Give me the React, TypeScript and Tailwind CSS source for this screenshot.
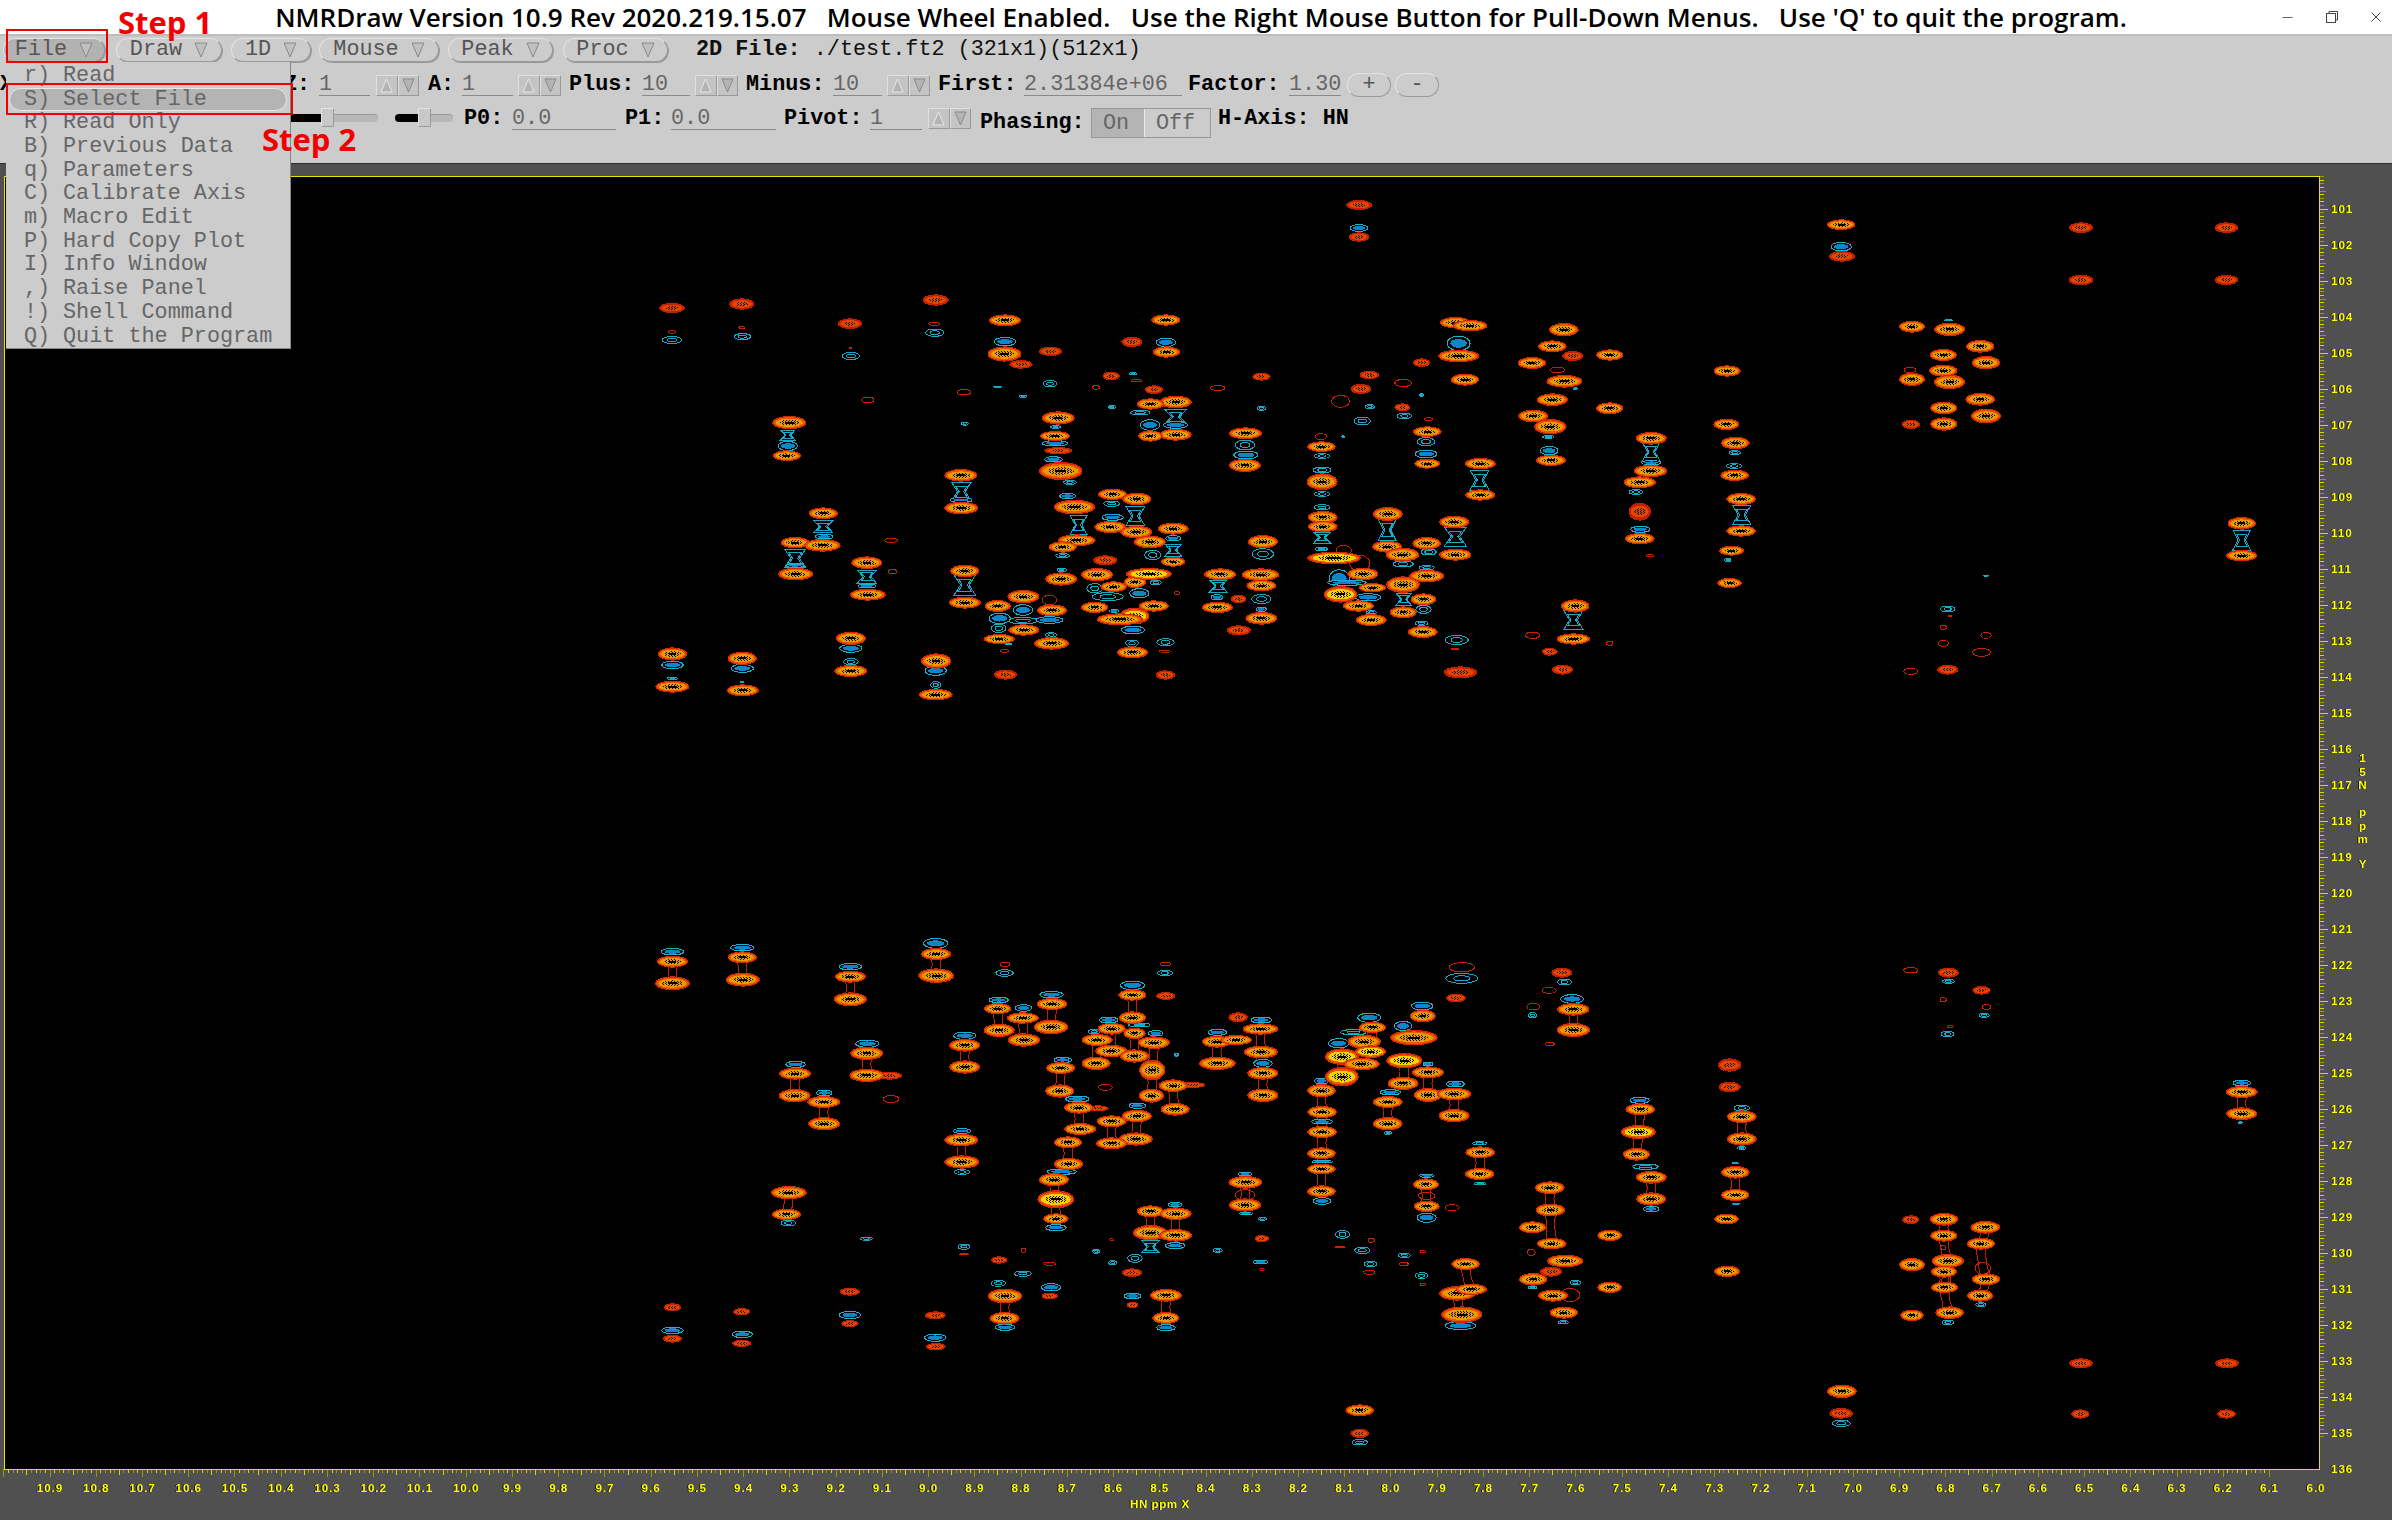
import React from 'react';

// peak tables are read off crops of the spectrum: x y rx ry type (crop px)
type Kind = 'o' | 'y' | 'R' | 'l' | 'c' | 'b';
interface Peak { x: number; y: number; rx: number; ry: number; t: Kind }

const crops: { ox: number; oy: number; sx: number; data: string }[] = [
  {
    ox: 640, oy: 280, sx: 2.063,
    data: `66 84 24 13 R;210 72 24 14 R;433 131 23 13 R;610 60 25 14 R;66 180 20 11 c;211 170 17 9 c;435 228 18 11 c;608 158 19 11 c;66 155 7 5 l;210 143 6 3 l;434 204 3 3 l;607 131 11 5 l;
753 121 30 15 o;753 185 22 13 b;752 222 32 20 o;786 253 22 10 R;847 214 22 11 R;1085 120 27 14 o;1085 187 20 13 b;1086 216 25 14 o;1015 186 20 12 R;
668 337 14 8 l;737 320 8 2 c;846 311 14 10 c;790 349 7 4 c;941 322 7 6 l;972 288 16 10 R;1017 281 7 4 c;1024 302 11 4 l;1060 329 17 10 R;1192 324 15 7 l;1282 290 17 9 R;974 381 7 5 c;1032 398 20 7 c;1282 385 9 6 c;670 431 7 5 c;470 360 13 8 l;
308 428 32 17 o;305 465 15 15 c;305 498 20 14 b;303 527 26 13 o;1105 366 30 16 o;1053 372 25 14 o;1105 410 22 22 c;1105 435 25 10 b;1052 435 20 16 b;1105 464 30 15 o;1053 468 22 14 o;
1249 460 31 15 o;1248 495 20 15 c;1250 525 25 12 b;1248 556 30 17 o;863 414 31 17 o;857 441 10 4 c;856 468 28 12 o;856 490 26 8 b;863 512 27 8 R;853 538 18 8 b;868 573 42 24 o;887 607 13 6 c;
662 586 31 16 o;663 635 20 28 c;662 660 22 7 b;663 684 32 16 o;378 700 27 15 o;378 740 20 18 c;380 770 18 7 b;320 788 27 14 o;376 796 35 16 o;320 835 22 28 c;320 857 18 5 b;321 882 33 16 o;518 781 13 6 l;521 875 8 7 l;
468 848 29 16 o;468 890 20 20 c;468 918 18 6 b;470 944 34 15 o;670 873 27 16 o;670 915 22 30 c;670 968 30 15 o;
882 648 16 8 b;973 671 16 8 c;975 712 22 9 b;975 643 27 14 o;1025 657 27 16 o;1022 708 19 28 c;970 741 30 15 o;1024 756 30 16 o;1100 746 29 15 o;1052 786 30 16 o;896 681 40 19 o;905 735 17 28 c;901 781 36 15 o;872 801 26 14 o;872 827 14 6 c;870 870 10 5 c;869 897 30 17 o;960 841 23 12 R;1100 845 22 12 o;1100 775 15 8 b;1058 825 17 14 c;1100 810 17 18 c;
1197 883 30 15 o;1193 918 18 18 c;1190 952 12 8 b;1280 884 36 16 o;1282 917 28 14 o;1285 822 22 16 c;1285 785 28 17 o;1282 957 20 14 c;1282 988 10 7 b;1282 1015 30 16 o;
943 884 30 17 o;977 920 24 13 o;1021 906 20 15 o;1050 882 45 15 y;938 925 16 14 c;965 950 32 12 c;1030 940 20 14 b;1064 908 11 7 c;1060 978 28 14 o;938 982 25 14 o;1108 939 5 5 l;978 993 10 4 b;1020 1008 28 22 y;990 1018 45 15 o;
1017 1050 24 12 b;1015 1090 13 10 c;1016 1117 29 15 o;1084 1087 18 11 c;1083 1114 12 3 l;1084 1185 18 11 R;1191 982 29 14 o;1235 957 14 10 R;1235 1051 23 12 R;
791 950 30 17 o;738 978 24 15 o;850 991 28 15 o;845 960 15 15 l;790 990 20 16 b;742 1015 22 16 b;845 1020 28 10 b;790 1022 30 10 c;740 1045 15 13 c;792 1050 29 14 o;741 1077 29 12 o;760 1092 6 2 b;848 1065 11 7 c;849 1090 33 16 o;752 1112 8 5 l;754 1184 22 12 R;
67 1122 27 17 o;67 1155 22 12 b;67 1195 10 4 c;67 1220 32 15 o;211 1135 27 17 o;211 1165 23 12 b;210 1206 4 3 c;212 1231 30 15 o;435 1075 28 17 o;435 1105 23 12 b;435 1145 15 10 c;435 1173 31 15 o;611 1143 28 20 o;610 1172 22 14 b;610 1215 10 10 c;610 1244 32 14 o`,
  },
  {
    ox: 1280, oy: 180, sx: 1.568,
    data: `124 75 19 12 R;124 144 14 10 b;124 171 15 11 R;880 134 20 13 o;880 200 16 13 b;881 229 19 13 R;1256 143 17 13 R;1484 143 17 13 R;1256 300 18 13 R;1484 300 17 12 R;1048 421 6 2 c;
275 428 22 14 o;298 437 25 14 o;280 490 18 22 b;280 528 30 16 o;290 599 20 15 o;222 548 12 10 R;140 585 14 10 R;193 609 13 11 l;127 627 15 12 R;95 664 14 18 l;222 645 3 5 c;141 680 7 6 c;192 682 11 9 R;195 708 11 8 c;233 718 6 5 l;129 723 13 12 c;99 770 2 3 c;
231 755 20 13 o;229 785 14 12 c;229 822 17 12 b;231 851 18 12 o;445 449 21 17 o;427 499 20 15 o;459 528 15 12 R;517 525 19 14 o;395 549 20 15 o;435 570 11 8 l;446 604 26 16 o;463 626 3 3 c;427 659 22 16 o;517 685 19 15 o;397 708 21 16 o;424 740 23 20 o;421 771 9 4 c;422 812 14 13 b;425 841 21 14 o;
701 573 19 14 o;700 733 18 14 o;582 775 22 16 o;582 815 14 28 c;582 848 15 6 b;581 873 24 16 o;564 907 23 15 o;558 936 11 7 c;564 995 16 24 R;565 1048 15 9 b;564 1076 21 14 o;
714 789 20 16 o;713 818 9 6 c;712 858 12 7 c;713 886 20 14 o;723 957 21 15 o;724 1005 14 28 c;723 1053 21 14 o;708 1112 17 12 o;702 1140 5 5 c;705 1209 17 12 o;314 851 22 14 o;313 900 15 30 c;314 945 21 14 o;
65 800 20 13 o;64 770 9 9 l;66 828 12 7 c;66 870 14 9 c;66 905 22 22 o;66 942 12 7 c;66 982 12 8 c;67 1012 21 16 o;67 1040 21 14 o;66 1073 13 16 c;65 1107 9 6 c;85 1134 40 16 y;100 1112 12 16 l;125 1150 16 24 l;93 1195 16 26 b;105 1208 30 8 b;130 1182 22 16 o;145 1223 19 11 o;95 1243 24 22 y;138 1252 20 11 b;123 1278 22 14 o;143 1297 8 5 c;143 1320 22 15 o;
169 1002 21 18 o;168 1050 14 32 c;168 1100 21 15 o;192 1124 24 18 o;230 1090 20 16 o;233 1116 12 9 c;193 1152 16 9 c;230 1163 12 6 c;230 1188 25 16 o;193 1214 24 22 o;194 1258 12 18 c;225 1258 18 15 o;225 1288 12 12 c;222 1330 10 6 c;224 1356 21 15 o;193 1297 19 15 o;273 1026 21 16 o;275 1070 17 28 c;275 1124 23 15 o;
277 1380 18 14 c;274 1407 6 2 l;283 1477 25 15 R;396 1366 11 10 l;423 1415 11 9 R;443 1469 15 12 R;463 1278 20 17 o;460 1320 15 28 c;460 1377 24 14 o;517 1390 5 6 l;580 1127 6 3 l;1047 1287 11 9 c;1050 1308 3 2 l;1040 1342 5 6 l;1107 1366 8 9 l;1040 1390 8 9 l;1100 1417 14 12 l;989 1474 11 9 l;1047 1469 15 12 R;1107 1187 4 2 c;
991 440 18 15 o;1050 448 22 17 o;1098 499 20 16 o;1040 525 19 15 o;1107 548 20 17 o;1040 572 20 15 o;991 598 18 17 o;988 570 9 9 l;1050 606 22 19 o;1098 658 21 16 o;1041 684 19 16 o;1107 708 21 19 o;989 733 13 11 R;1041 732 19 17 o;1508 1030 20 16 o;1508 1080 14 30 c;1508 1127 22 14 o`,
  },
  {
    ox: 640, oy: 930, sx: 2.063,
    data: `67 65 23 10 b;67 95 29 15 o;67 160 33 18 o;211 53 24 10 b;211 82 27 15 o;212 149 32 18 o;434 110 23 10 b;434 140 29 15 o;434 208 31 18 o;610 40 25 15 b;611 72 28 15 o;611 137 34 19 o;
753 103 10 6 l;752 129 18 10 c;1084 102 11 5 l;1083 129 15 8 c;1085 198 18 9 R;1016 166 25 13 b;1016 195 26 14 o;1016 263 25 16 o;1234 262 18 12 R;
740 210 20 8 b;738 236 25 14 o;741 301 29 17 o;791 234 17 10 b;790 264 30 14 o;792 330 30 17 o;849 194 24 10 b;850 222 29 15 o;848 291 33 19 o;
670 317 23 11 b;670 346 29 16 o;670 411 29 17 o;469 341 24 11 b;468 370 31 17 o;468 436 33 17 o;515 437 24 9 R;321 403 20 9 b;320 431 30 15 o;319 497 30 17 o;380 489 16 8 b;379 516 31 15 o;380 581 30 17 o;518 507 16 11 l;
967 270 19 9 b;973 296 26 15 o;943 330 29 15 o;972 363 30 16 o;941 400 27 17 o;937 305 12 7 c;1020 310 20 14 o;1030 285 22 6 c;1064 310 15 8 b;1060 338 30 16 o;1020 378 27 17 o;1057 420 24 28 o;1107 374 5 5 c;
1191 307 19 9 b;1190 335 28 15 o;1230 330 30 12 o;1191 400 35 17 o;1282 270 21 9 b;1280 297 34 14 o;1281 366 32 16 o;1285 400 19 12 b;1285 430 29 16 o;1285 496 29 17 o;
872 390 18 8 b;868 414 27 15 o;866 483 27 17 o;960 472 14 9 l;1055 497 23 18 o;1100 467 27 16 o;1140 465 25 6 R;1104 538 27 16 o;902 507 24 9 b;905 533 27 15 o;945 535 20 6 R;908 597 30 15 o;1026 527 17 8 b;1025 558 28 16 o;973 574 28 15 o;1023 627 32 17 o;973 640 29 15 o;
883 637 26 15 o;884 702 27 16 o;664 603 18 7 b;663 630 32 16 o;664 696 33 17 o;664 726 16 7 c;870 725 30 8 b;854 749 28 17 o;858 808 35 24 y;858 866 23 13 o;858 893 21 9 b;307 788 34 17 o;302 853 27 14 o;306 879 15 8 c;
1248 732 14 5 b;1249 757 32 16 o;1248 825 30 17 o;1248 795 20 16 l;1250 851 13 4 b;1284 866 8 5 c;1053 844 25 15 o;1104 824 14 7 b;1105 851 30 16 o;1053 908 33 20 o;1105 916 31 16 o;1053 950 18 18 c;1104 947 20 9 b;
467 926 12 5 c;668 950 12 8 c;668 973 9 2 l;741 990 15 8 R;791 961 5 6 l;845 1001 12 5 l;973 929 4 3 l;941 964 7 6 c;975 998 8 6 c;1021 985 15 12 c;1015 1028 19 10 R;1192 961 9 6 c;1280 996 15 6 b;1283 1019 5 3 l;1283 926 13 8 R;
790 1031 17 8 c;739 1060 15 9 c;848 1072 20 11 b;845 1098 15 7 R;1016 1098 17 9 b;1016 1125 10 7 R;753 1098 33 19 o;752 1165 28 16 o;753 1192 20 9 b;1085 1096 30 16 o;1085 1164 25 15 o;1085 1193 19 9 b;
67 1132 16 9 R;67 1201 22 10 b;67 1226 18 9 R;210 1145 16 8 R;211 1213 21 10 b;210 1240 18 8 R;433 1085 19 9 R;433 1155 22 11 b;433 1181 16 8 R;609 1156 20 9 R;609 1223 22 11 b;610 1250 19 8 R`,
  },
  {
    ox: 1280, oy: 950, sx: 1.568,
    data: `285 52 20 14 l;285 85 25 15 c;276 144 14 10 R;442 68 15 12 R;446 96 11 9 c;422 121 11 9 l;397 170 10 10 l;396 196 6 8 c;458 147 18 13 b;460 178 23 16 o;460 240 24 18 o;423 282 7 5 l;
989 61 11 8 l;1048 68 15 12 R;1048 94 9 6 c;1100 121 13 10 R;1040 149 5 6 l;1108 171 7 7 l;1104 196 8 6 c;1051 230 5 3 l;1047 252 10 8 c;705 345 17 17 R;705 411 16 13 R;
223 168 17 12 b;224 198 18 16 o;140 203 18 14 b;145 232 19 14 o;193 228 14 14 b;210 263 35 20 o;115 247 20 8 c;92 280 16 14 b;132 275 24 18 o;142 305 22 16 y;97 320 24 22 y;128 342 26 16 o;97 380 24 26 y;195 332 26 20 y;232 342 8 6 b;232 367 23 15 o;193 400 22 17 o;232 435 20 18 o;275 402 14 9 b;273 432 25 16 o;273 497 22 17 o;173 427 16 8 b;169 456 21 15 o;169 521 21 17 o;169 549 6 4 c;
65 393 11 9 b;65 422 20 17 o;66 486 21 15 o;66 515 16 7 b;66 546 21 15 o;65 610 20 15 o;66 635 16 4 b;65 657 20 13 o;65 724 20 15 o;66 753 14 10 b;313 580 11 5 c;314 607 21 15 o;313 672 21 15 o;314 701 9 4 c;230 677 11 5 b;229 703 18 15 o;230 737 13 11 l;230 769 18 14 o;270 773 11 9 l;230 803 15 14 b;
98 853 11 12 c;94 891 7 3 l;143 871 5 6 l;129 901 12 10 c;142 942 10 8 c;140 967 9 6 l;195 916 9 7 c;194 942 7 5 l;224 905 4 4 l;222 977 10 9 c;224 1003 4 4 l;291 942 20 15 o;278 1030 26 19 o;300 1018 22 14 o;285 1094 30 22 o;283 1127 24 12 b;
564 451 15 9 b;565 478 21 15 o;562 546 25 18 y;559 613 19 16 o;573 650 20 8 c;582 682 22 16 o;582 747 21 17 o;582 777 12 8 b;724 474 12 8 c;724 500 21 16 o;724 567 21 17 o;724 594 7 4 c;714 640 5 2 c;714 667 20 16 o;714 735 20 15 o;715 761 6 2 b;
423 713 21 16 o;424 780 21 16 o;396 832 19 15 o;517 856 17 14 o;426 881 21 14 o;394 907 6 9 l;447 933 26 16 o;425 965 16 12 R;397 988 20 16 o;463 998 8 7 c;396 1013 7 4 c;428 1037 21 15 o;455 1035 15 20 l;445 1088 20 15 o;444 1117 8 5 c;517 1012 17 14 o;700 807 17 13 o;701 964 18 14 o;
989 809 12 10 R;1041 808 20 16 o;1106 832 21 16 o;1041 857 19 15 o;1099 881 20 15 o;1040 893 4 7 l;1047 933 23 18 o;991 944 18 17 o;1041 965 18 15 o;1102 955 12 18 l;1107 988 20 15 o;1042 1012 19 14 o;1098 1037 18 15 o;1099 1064 8 6 c;1050 1088 20 16 o;991 1096 16 14 o;1047 1117 9 7 c;
1256 1240 17 12 R;1485 1240 17 12 R;881 1324 21 17 o;880 1390 17 13 R;880 1420 14 10 c;1255 1392 13 11 R;1484 1392 13 11 R;125 1381 20 15 o;125 1450 13 11 R;125 1477 12 8 c;1508 399 14 8 b;1508 426 23 15 o;1508 491 22 16 o;1506 518 3 3 c`,
  },
];

const peaks: Peak[] = crops.flatMap((c) =>
  c.data.split(';').map((s) => {
    const [x, y, rx, ry, t] = s.trim().split(' ');
    return {
      x: c.ox + Number(x) / c.sx,
      y: c.oy + Number(y) / 3,
      rx: Number(rx) / c.sx,
      ry: Number(ry) / 3,
      t: t as Kind,
    };
  })
);

const isHot = (p: Peak) => p.t === 'o' || p.t === 'y';

// lower half: the orange pairs are joined by thin red contours
const links: [Peak, Peak][] = [];
peaks.forEach((a, i) => {
  peaks.slice(i + 1).forEach((b) => {
    if (isHot(a) && isHot(b) && a.y > 900 && Math.abs(a.x - b.x) < 6 && Math.abs(a.y - b.y) < 36 && Math.abs(a.y - b.y) > 12) {
      links.push([a, b]);
    }
  });
});

function HotPeak({ p }: { p: Peak }) {
  const { x, y } = p;
  const rx = p.rx + 1.5;
  const ry = p.ry + 1;
  const core = p.t === 'y' ? '#f4d400' : '#e89c00';
  return (
    <g>
      <ellipse cx={x} cy={y} rx={rx} ry={ry} fill="#d42600" />
      <ellipse cx={x} cy={y} rx={rx * 0.92} ry={ry * 0.82} fill="#ea5800" />
      <ellipse cx={x} cy={y} rx={rx * 0.8} ry={ry * 0.62} fill={core} />
      <ellipse cx={x} cy={y} rx={rx * 0.6} ry={ry * 0.42} fill="url(#dither)" />
      <rect x={x - rx * 0.25} y={y - 1} width={rx * 0.5} height={2} fill="#000" />
    </g>
  );
}

function WeakPeak({ p }: { p: Peak }) {
  const { x, y } = p;
  const rx = p.rx + 1;
  const ry = p.ry + 1;
  return (
    <g>
      <ellipse cx={x} cy={y} rx={rx} ry={ry} fill="#c42000" />
      <ellipse cx={x} cy={y} rx={rx * 0.8} ry={ry * 0.65} fill="#e04800" />
      <ellipse cx={x} cy={y} rx={rx * 0.5} ry={ry * 0.38} fill="url(#dither)" />
    </g>
  );
}

function CyanPeak({ p }: { p: Peak }) {
  const { x, y, rx, ry } = p;
  if (ry >= 5 && ry / rx > 0.55) {
    const glass = (k: number) =>
      `M${x - rx * k} ${y - ry * k}L${x + rx * k} ${y - ry * k}L${x + rx * 0.4 * k} ${y}L${x + rx * k} ${y + ry * k}L${x - rx * k} ${y + ry * k}L${x - rx * 0.4 * k} ${y}Z`;
    return (
      <g fill="none" stroke="#1aa8c8" strokeWidth={1}>
        <path d={glass(1)} />
        <path d={glass(0.6)} />
      </g>
    );
  }
  return (
    <g fill="none" stroke="#1aa8c8" strokeWidth={1}>
      <ellipse cx={x} cy={y} rx={rx} ry={ry} />
      <ellipse cx={x} cy={y} rx={rx * 0.5} ry={ry * 0.5} />
    </g>
  );
}

function BluePeak({ p }: { p: Peak }) {
  const { x, y, rx, ry } = p;
  return (
    <g>
      <ellipse cx={x} cy={y} rx={rx} ry={ry} fill="#000" stroke="#1cb0d4" strokeWidth={1} />
      <ellipse cx={x} cy={y} rx={rx * 0.72} ry={ry * 0.6} fill="#0c86c8" />
    </g>
  );
}

function Spectrum() {
  return (
    <g shapeRendering="crispEdges">
      <defs>
        <pattern id="dither" width="3" height="2" patternUnits="userSpaceOnUse">
          <rect width="1" height="1" fill="#000" />
          <rect x="2" y="1" width="1" height="1" fill="#000" />
        </pattern>
      </defs>
      {links.map(([a, b], i) => (
        <g key={i} fill="none" stroke="#c42000" strokeWidth={1}>
          <path d={`M${a.x - 6} ${a.y}Q${a.x - 2} ${(a.y + b.y) / 2} ${b.x - 6} ${b.y}`} />
          <path d={`M${a.x + 6} ${a.y}Q${a.x + 2} ${(a.y + b.y) / 2} ${b.x + 6} ${b.y}`} />
        </g>
      ))}
      {peaks.filter((p) => p.t === 'l').map((p, i) => (
        <ellipse key={i} cx={p.x} cy={p.y} rx={p.rx} ry={p.ry} fill="none" stroke="#c82000" strokeWidth={1} />
      ))}
      {peaks.filter((p) => p.t === 'c').map((p, i) => <CyanPeak key={i} p={p} />)}
      {peaks.filter((p) => p.t === 'b').map((p, i) => <BluePeak key={i} p={p} />)}
      {peaks.filter((p) => p.t === 'R').map((p, i) => <WeakPeak key={i} p={p} />)}
      {peaks.filter(isHot).map((p, i) => <HotPeak key={i} p={p} />)}
    </g>
  );
}

const xTicks = Array.from({ length: 491 }, (_, i) => 50 - 46.24 + i * 4.624);
const yTicks = Array.from({ length: 351 }, (_, i) => 176.6 + i * 3.6);
const xLabels = Array.from({ length: 49 }, (_, i) => (10.9 - i * 0.1).toFixed(1));
const yLabels = Array.from({ length: 36 }, (_, i) => 101 + i);
const sideLabel: [string, number][] = [['1', 758], ['5', 772], ['N', 785], ['p', 812], ['p', 826], ['m', 839], ['Y', 864]];

function Axes() {
  return (
    <g>
      <g shapeRendering="crispEdges" strokeWidth={1}>
        {xTicks.map((x, i) => {
          const big = i % 10 === 0;
          const mid = i % 5 === 0;
          return <line key={i} x1={x} x2={x} y1={1469} y2={1469 + (big ? 8 : mid ? 6 : 4)} stroke={i % 2 ? '#d8d800' : '#989800'} />;
        })}
        {yTicks.map((y, i) => {
          if (y > 1469) return null;
          const big = (i - 9) % 10 === 0;
          const mid = (i - 9) % 5 === 0;
          return <line key={i} x1={2320} x2={2320 + (big ? 8 : mid ? 6 : 4)} y1={y} y2={y} stroke={i % 2 ? '#d8d800' : '#989800'} />;
        })}
        <rect x={4.5} y={176.5} width={2315} height={1292.5} fill="none" stroke="#e4e400" strokeWidth={1} />
      </g>
      <g
        fill="#ffff00"
        fontFamily="'Liberation Sans', sans-serif"
        fontSize={11.5}
        fontWeight={700}
        letterSpacing={1}
        className="[filter:drop-shadow(-1px_0_0_#111)]"
      >
        {xLabels.map((l, i) => (
          <text key={l} x={50 + i * 46.24} y={1492} textAnchor="middle">{l}</text>
        ))}
        <text x={2316} y={1492} textAnchor="middle">6.0</text>
        {yLabels.map((l, i) => (
          <text key={l} x={2331} y={213 + i * 36}>{l}</text>
        ))}
        {sideLabel.map(([c, y], i) => (
          <text key={i} x={2363} y={y + 4} textAnchor="middle">{c}</text>
        ))}
        <text x={1130} y={1508} letterSpacing={0.6}>HN ppm X</text>
      </g>
    </g>
  );
}

function DownTri() {
  return (
    <svg width="14" height="16" viewBox="0 0 14 16" className="shrink-0">
      <path d="M1 1H13L7 15Z" fill="#c0c0c0" stroke="#8a8a8a" strokeWidth="1" />
    </svg>
  );
}

function MenuButton({ label, width, active }: { label: string; width: string; active?: boolean }) {
  return (
    <div
      className={`h-[24px] ${width} flex items-center justify-center gap-[12px] rounded-full border border-[#9a9a9a] border-t-[#e4e4e4] border-l-[#e4e4e4] shadow-[1px_1px_0_#9a9a9a] text-[#555] ${
        active ? 'bg-[#b2b2b2]' : 'bg-[#cccccc]'
      }`}
    >
      <span>{label}</span>
      <DownTri />
    </div>
  );
}

function Spin() {
  const box = 'w-[21.5px] h-[21px] bg-[#c4c4c4] border border-[#e0e0e0] border-r-[#999] border-b-[#999] flex items-center justify-center';
  return (
    <div className="flex shrink-0">
      <div className={box}>
        <svg width="13" height="15" viewBox="0 0 13 15"><path d="M6.5 1L12 14H1Z" fill="#b4b4b4" stroke="#e8e8e8" /></svg>
      </div>
      <div className={box}>
        <svg width="13" height="15" viewBox="0 0 13 15"><path d="M1 1H12L6.5 14Z" fill="#b4b4b4" stroke="#8a8a8a" /></svg>
      </div>
    </div>
  );
}

function Field({ value, width }: { value: string; width: string }) {
  return (
    <div className={`${width} h-[22px] shrink-0 border-b border-[#8a8a8a] text-[#666] leading-[22px] whitespace-pre`}>{value}</div>
  );
}

function Label({ text, className }: { text: string; className: string }) {
  return <div className={`font-bold text-black shrink-0 whitespace-pre ${className}`}>{text}</div>;
}

function RoundBtn({ text }: { text: string }) {
  return (
    <div className="w-[44px] h-[24px] shrink-0 rounded-full border border-[#9a9a9a] border-t-[#e4e4e4] border-l-[#e4e4e4] flex items-center justify-center text-[#555]">{text}</div>
  );
}

function Slider({ black, rest }: { black: string; rest: string }) {
  return (
    <div className="flex items-center h-[19px] shrink-0">
      <div className={`${black} h-[8px] bg-black rounded-l-full`} />
      <div className="w-[13px] h-[19px] bg-[#c8c8c8] border border-[#e4e4e4] border-r-[#999] border-b-[#999]" />
      <div className={`${rest} h-[8px] bg-[#b8b8b8] border-t border-[#999] rounded-r-full`} />
    </div>
  );
}

const menuItems: [string, string][] = [
  ['r)', 'Read'],
  ['S)', 'Select File'],
  ['R)', 'Read Only'],
  ['B)', 'Previous Data'],
  ['q)', 'Parameters'],
  ['C)', 'Calibrate Axis'],
  ['m)', 'Macro Edit'],
  ['P)', 'Hard Copy Plot'],
  ['I)', 'Info Window'],
  [',)', 'Raise Panel'],
  ['!)', 'Shell Command'],
  ['Q)', 'Quit the Program'],
];

function FileMenu() {
  return (
    <div className="absolute left-[6px] top-[62px] w-[285px] h-[287px] bg-[#cccccc] border-r border-b border-[#888] pt-[2px] font-['Liberation_Mono',monospace] text-[21.8px] text-[#666]">
      {menuItems.map(([key, name], i) => (
        <div
          key={key}
          className={`h-[23.7px] flex items-center whitespace-pre leading-none ${
            i === 1 ? 'bg-[#b4b4b4] rounded-full border border-[#e8e8e8] mx-[3px] pl-[14px]' : 'pl-[18px]'
          }`}
        >
          <span className="w-[39px]">{key}</span>
          <span>{name}</span>
        </div>
      ))}
    </div>
  );
}

function Toolbar() {
  return (
    <div className="h-[130px] shrink-0 bg-[#cccccc] border-t-2 border-[#bdbdbd] border-b border-b-[#2e2e2e] pt-[2px] font-['Liberation_Mono',monospace] text-[21.8px] leading-[22px]">
      <div className="flex items-center h-[24px] pl-[3px]">
        <MenuButton label="File" width="w-[102px]" active />
        <div className="w-[11px]" />
        <MenuButton label="Draw" width="w-[106px]" />
        <div className="w-[9px]" />
        <MenuButton label="1D" width="w-[80px]" />
        <div className="w-[8px]" />
        <MenuButton label="Mouse" width="w-[120px]" />
        <div className="w-[9px]" />
        <MenuButton label="Peak" width="w-[105px]" />
        <div className="w-[10px]" />
        <MenuButton label="Proc" width="w-[105px]" />
        <div className="ml-[28px] whitespace-pre text-[#111]"><b>2D File:</b> ./test.ft2 (321x1)(512x1)</div>
      </div>

      <div className="flex items-center h-[24px] mt-[11px]">
        <Label text="X:" className="w-[284px]" />
        <Label text="Z:" className="w-[35px]" />
        <Field value="1" width="w-[51px]" />
        <div className="ml-[6px]"><Spin /></div>
        <Label text="A:" className="ml-[9px] w-[34px]" />
        <Field value="1" width="w-[51px]" />
        <div className="ml-[5px]"><Spin /></div>
        <Label text="Plus:" className="ml-[8px] w-[73px]" />
        <Field value="10" width="w-[48px]" />
        <div className="ml-[5px]"><Spin /></div>
        <Label text="Minus:" className="ml-[8px] w-[87px]" />
        <Field value="10" width="w-[49px]" />
        <div className="ml-[5px]"><Spin /></div>
        <Label text="First:" className="ml-[8px] w-[86px]" />
        <Field value="2.31384e+06" width="w-[158px]" />
        <Label text="Factor:" className="ml-[6px] w-[101px]" />
        <Field value="1.30" width="w-[52px]" />
        <div className="ml-[6px]"><RoundBtn text="+" /></div>
        <div className="ml-[4px]"><RoundBtn text="-" /></div>
      </div>

      <div className="flex items-start h-[30px] mt-[11px]">
        <div className="w-[240px] shrink-0" />
        <Slider black="w-[81px]" rest="w-[44px]" />
        <div className="ml-[17px]"><Slider black="w-[23px]" rest="w-[22px]" /></div>
        <Label text="P0:" className="ml-[11px] w-[48px]" />
        <Field value="0.0" width="w-[104px]" />
        <Label text="P1:" className="ml-[9px] w-[46px]" />
        <Field value="0.0" width="w-[105px]" />
        <Label text="Pivot:" className="ml-[8px] w-[86px]" />
        <Field value="1" width="w-[52px]" />
        <div className="ml-[6px]"><Spin /></div>
        <Label text="Phasing:" className="ml-[9px] w-[111px] mt-[4px]" />
        <div className="flex h-[30px] border border-[#999] shrink-0 text-[#666]">
          <div className="w-[52px] bg-[#b4b4b4] flex items-center justify-center pt-[2px] pr-[4px]">On</div>
          <div className="w-[66px] bg-[#cccccc] border-l border-[#e8e8e8] flex items-center justify-center pt-[2px] pr-[4px]">Off</div>
        </div>
        <Label text="H-Axis: HN" className="ml-[7px]" />
      </div>
    </div>
  );
}

function TitleBar() {
  return (
    <div className="h-[34px] shrink-0 bg-white flex items-center">
      <div className="flex-1 pl-[132px] text-center whitespace-pre font-['Open_Sans',sans-serif] font-semibold text-[26px] leading-[30px] text-black">
        {"NMRDraw Version 10.9 Rev 2020.219.15.07   Mouse Wheel Enabled.   Use the Right Mouse Button for Pull-Down Menus.   Use 'Q' to quit the program."}
      </div>
      <div className="w-[122px] shrink-0 flex items-center pl-[12px] gap-[33px]">
        <svg width="11" height="11" viewBox="0 0 11 11"><path d="M0.5 5.5H10.5" stroke="#666" /></svg>
        <svg width="12" height="12" viewBox="0 0 12 12" fill="none" stroke="#444">
          <path d="M3 2.5V0.5H11.5V9H9.5" />
          <rect x="0.5" y="2.5" width="9" height="9" />
        </svg>
        <svg width="10" height="10" viewBox="0 0 10 10"><path d="M0.5 0.5L9.5 9.5M9.5 0.5L0.5 9.5" stroke="#444" /></svg>
      </div>
    </div>
  );
}

export default function App() {
  return (
    <div className="relative w-[2392px] h-[1520px] overflow-hidden flex flex-col bg-[#505050]">
      <TitleBar />
      <Toolbar />

      <div className="flex-1 min-h-0">
        <svg width="2392" height="1356" viewBox="0 164 2392 1356" className="block">
          <rect x="4" y="176" width="2316" height="1293" fill="#000" />
          <Spectrum />
          <Axes />
        </svg>
      </div>

      <FileMenu />

      {/* red call-outs drawn over the screenshot */}
      <div className="absolute left-[6px] top-[29px] w-[102px] h-[34px] border-2 border-[#f00000]" />
      <div className="absolute left-[6px] top-[83px] w-[287px] h-[32px] border-2 border-[#f00000]" />
      <div className="absolute left-[118px] top-[7px] font-['Open_Sans',sans-serif] font-bold text-[31px] leading-[30px] text-[#f00000]">Step 1</div>
      <div className="absolute left-[262px] top-[124px] font-['Open_Sans',sans-serif] font-bold text-[31px] leading-[30px] text-[#f00000]">Step 2</div>
    </div>
  );
}
